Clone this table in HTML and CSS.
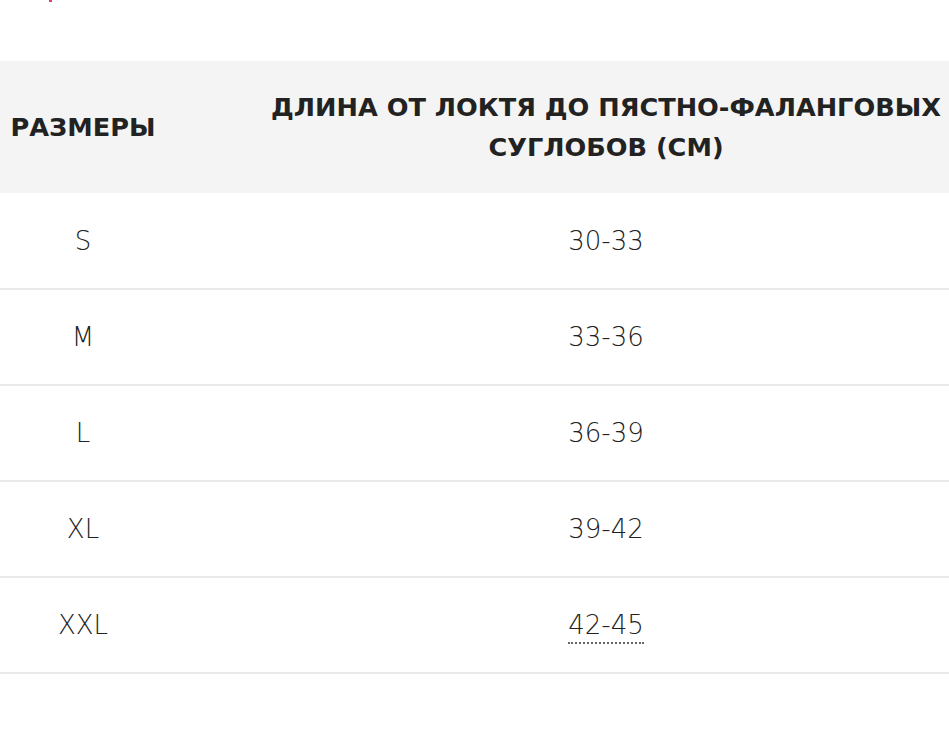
FILE: index.html
```html
<!DOCTYPE html>
<html lang="ru">
<head>
<meta charset="utf-8">
<title>Размеры</title>
<link rel="stylesheet" href="styles.css">
</head>
<body>
<div class="top"><span class="mark"></span></div>
<table class="sizes">
  <thead>
    <tr>
      <th class="c1">РАЗМЕРЫ</th>
      <th class="c2">ДЛИНА ОТ ЛОКТЯ ДО ПЯСТНО-ФАЛАНГОВЫХ<br>СУГЛОБОВ (СМ)</th>
    </tr>
  </thead>
  <tbody>
    <tr><td class="c1">S</td><td class="c2">30-33</td></tr>
    <tr><td class="c1">M</td><td class="c2">33-36</td></tr>
    <tr><td class="c1">L</td><td class="c2">36-39</td></tr>
    <tr><td class="c1">XL</td><td class="c2">39-42</td></tr>
    <tr><td class="c1">XXL</td><td class="c2"><span class="dotted">42-45</span></td></tr>
  </tbody>
</table>
</body>
</html>
```

FILE: styles.css
```css
html, body {
  margin: 0;
  padding: 0;
  overflow: hidden;
  background: #fff;
}
body {
  font-family: "DejaVu Sans", "Open Sans", sans-serif;
  color: #333;
}
.top {
  height: 61px;
}
.mark {
  display: block;
  margin-left: 49px;
  width: 3px;
  height: 2px;
  background: #e2405e;
}
.sizes {
  border-collapse: collapse;
  width: 949px;
  table-layout: fixed;
}
.sizes th {
  background: #f4f4f4;
  color: #222;
  font-weight: bold;
  font-size: 25.6px;
  line-height: 40px;
  height: 132px;
  text-align: center;
  vertical-align: middle;
  white-space: nowrap;
}
.sizes .c1 {
  width: 166px;
  padding: 0;
}
.sizes .c2 {
  padding: 0 0 0 97px;
}
.sizes td {
  height: 95px;
  font-size: 26px;
  font-weight: 300;
  text-align: center;
  vertical-align: middle;
  border-bottom: 2px solid #e9e9e9;
  color: #222;
}
.sizes tbody tr + tr td {
  height: 94px;
}
.dotted {
  border-bottom: 2px dotted #666;
  padding-bottom: 2px;
}
```
